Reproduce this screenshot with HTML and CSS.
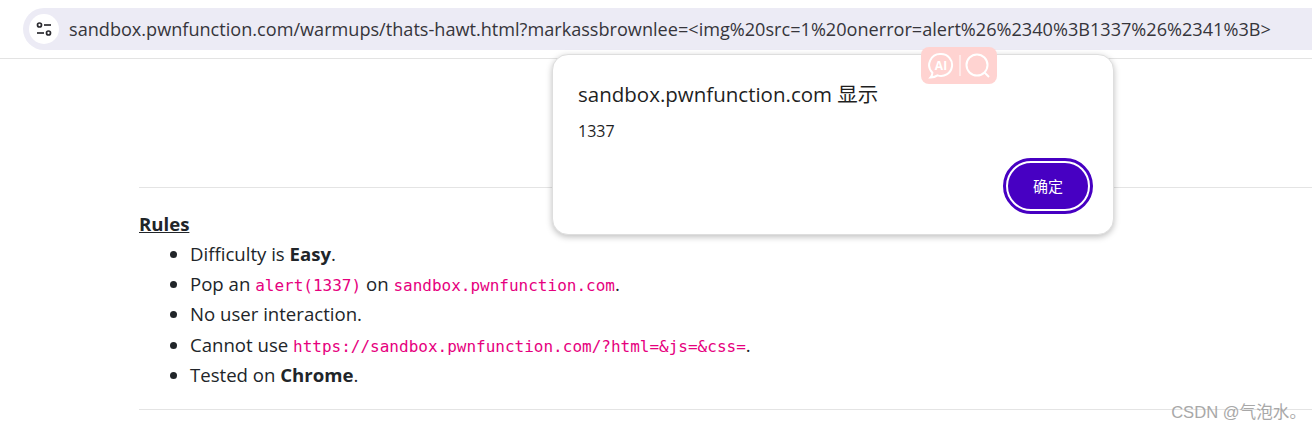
FILE: index.html
```html
<!DOCTYPE html>
<html>
  <head>
    <meta charset="UTF-8" />
    <title>That's Hawt</title>
    <link rel="stylesheet" href="styles.css">
  </head>
  <body>
    <div class="toolbar">
      <div class="omnibox">
        <span class="site-btn">
          <svg width="16" height="14" viewBox="0 0 16 14" fill="none" stroke="#2b2b30" stroke-width="1.7">
            <circle cx="3.5" cy="3" r="2"/>
            <path d="M8 3h7"/>
            <path d="M1 11h7"/>
            <circle cx="12.5" cy="11" r="2"/>
          </svg>
        </span>
        <span class="url">sandbox.pwnfunction.com/warmups/thats-hawt.html?markassbrownlee=&lt;img%20src=1%20onerror=alert%26%2340%3B1337%26%2341%3B&gt;</span>
      </div>
    </div>

    <div class="content">
      <hr class="rule">
      <div class="rules">
        <div class="rules-title">Rules</div>
        <ul class="rules-list">
          <li>Difficulty is <b>Easy</b>.</li>
          <li>Pop an <code>alert(1337)</code> on <code>sandbox.pwnfunction.com</code>.</li>
          <li>No user interaction.</li>
          <li>Cannot use <code>https://sandbox.pwnfunction.com/?html=&amp;js=&amp;css=</code>.</li>
          <li>Tested on <b>Chrome</b>.</li>
        </ul>
      </div>
      <hr class="rule">
    </div>

    <div class="dialog">
      <div class="dialog-title">sandbox.pwnfunction.com 显示</div>
      <div class="dialog-msg">1337</div>
      <div class="dialog-actions">
        <button class="ok-btn">确定</button>
      </div>
    </div>

    <div class="ai-tool">
      <svg width="64" height="30" viewBox="0 0 64 30" fill="none" stroke="#fff" stroke-width="2">
        <path d="M14 3a11 11 0 1 1-3.500 21.400c-1.800 1.300-4 2-7 2 1.200-1.300 1.900-2.800 1.900-4.700A11 11 0 0 1 14 3z"/>
        <text x="14" y="18.500" class="ai-text">AI</text>
        <path d="M33 4v21" stroke-width="1"/>
        <circle cx="50" cy="14" r="10.500"/>
        <path d="M57.500 21.500l4.500 4.500"/>
      </svg>
    </div>

    <div class="watermark">CSDN @气泡水。</div>
  </body>
</html>
```

FILE: styles.css
```css
html, body {
  height: 100%;
}

body {
  margin: 0;
  background-color: #fff;
  color: #212529;
  font-family: "Open Sans", "Noto Sans CJK SC", sans-serif;
  overflow: hidden;
  position: relative;
}

.toolbar {
  height: 50px;
  padding: 8px 0 0 23px;
  border-bottom: 1px solid #e3e3e3;
}

.omnibox {
  height: 42px;
  background-color: #ecebf5;
  border-radius: 21px 0 0 21px;
  display: flex;
  align-items: center;
  padding-left: 6px;
}

.site-btn {
  width: 30px;
  height: 30px;
  border-radius: 50%;
  background-color: #fff;
  display: flex;
  align-items: center;
  justify-content: center;
  flex-shrink: 0;
}

.url {
  margin-left: 10px;
  font-size: 18.12px;
  color: #36353b;
  white-space: nowrap;
}

.content {
  padding: 128px 0 0 139px;
}

.rule {
  margin: 0;
  border: 0;
  border-top: 1px solid #e4e4e4;
}

.rules {
  padding: 23px 0 19px;
  font-size: 18.6px;
  line-height: 30.2px;
}

.rules-title {
  font-weight: 700;
  text-decoration: underline;
  line-height: 26px;
  margin-bottom: 2px;
}

.rules-list {
  margin: 0;
  padding-left: 51px;
}

code {
  font-family: "DejaVu Sans Mono", monospace;
  font-size: 16px;
  line-height: 1;
  color: #e6007e;
}

.dialog {
  position: absolute;
  left: 552px;
  top: 54px;
  width: 562px;
  height: 181px;
  box-sizing: border-box;
  padding: 25px 23px 0 25px;
  background-color: #fff;
  border: 1px solid #dedede;
  border-radius: 16px;
  box-shadow: 0 2px 6px rgba(0, 0, 0, 0.25);
  color: #1f1f1f;
}

.dialog-title {
  font-size: 20.5px;
  line-height: 28px;
}

.dialog-msg {
  font-size: 16px;
  line-height: 20px;
  margin-top: 13px;
}

.dialog-actions {
  display: flex;
  justify-content: flex-end;
  margin-top: 20px;
}

.ok-btn {
  width: 84px;
  height: 50px;
  border: 2px solid #fff;
  outline: 3px solid #4700c2;
  border-radius: 25px;
  background-color: #4700c2;
  color: #fff;
  font-family: "Noto Sans CJK SC", sans-serif;
  font-size: 15px;
  padding: 0 0 2px;
}

.ai-tool {
  position: absolute;
  left: 921px;
  top: 47px;
  width: 76px;
  height: 37px;
  border-radius: 8px;
  background-color: #ffd3d1;
  display: flex;
  align-items: center;
  justify-content: center;
}

.ai-text {
  font-family: "Open Sans", sans-serif;
  font-size: 12px;
  font-weight: 700;
  fill: #fff;
  stroke: none;
  text-anchor: middle;
}

.watermark {
  position: absolute;
  right: 6px;
  top: 399px;
  font-family: "Liberation Sans", "Noto Sans CJK SC", sans-serif;
  font-size: 16.6px;
  color: #a8a8a8;
  white-space: nowrap;
}
```
